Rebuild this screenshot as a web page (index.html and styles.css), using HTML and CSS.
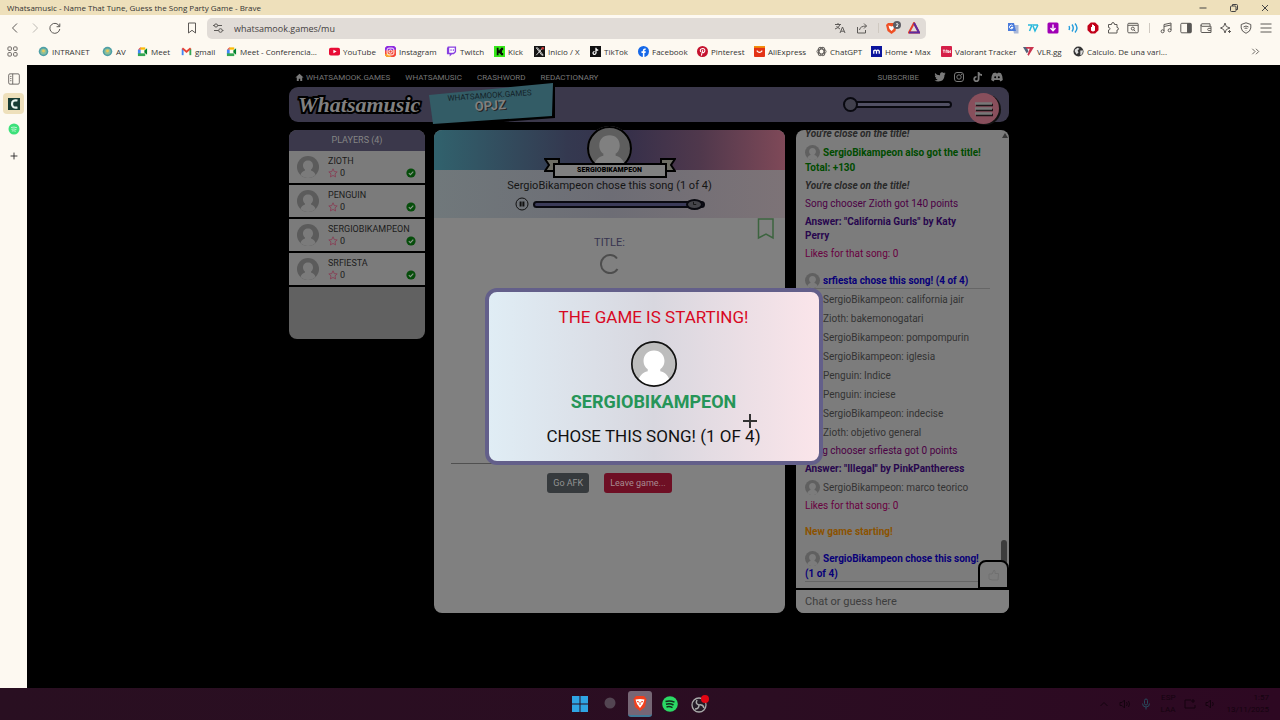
FILE: index.html
```html
<!DOCTYPE html>
<html lang="en">
<head>
<meta charset="utf-8">
<title>Whatsamusic - Name That Tune, Guess the Song Party Game</title>
<link rel="stylesheet" href="styles.css">
</head>
<body>
<svg class="defs" aria-hidden="true">
  <symbol id="person" viewBox="0 0 44 44"><circle cx="22" cy="22" r="22" fill="var(--disc)"/><path d="M22 9c6 0 10 4 10 10 0 4-2 7-4 8v2c5 1 8 5 9 9-8 8-22 8-30 0 1-4 4-8 9-9v-2c-2-1-4-4-4-8 0-6 4-10 10-10z" fill="var(--body)"/></symbol>
  <symbol id="star" viewBox="0 0 12 12"><path d="M6 1l1.5 3.3 3.5.4-2.6 2.4.7 3.6L6 8.9l-3.100 1.800.7-3.600L1 4.700l3.500-.4z" fill="none" stroke="#893c54" stroke-linejoin="round"/></symbol>
  <symbol id="check" viewBox="0 0 10 10"><circle cx="5" cy="5" r="4.600" fill="#064d0b"/><path d="M2.800 5.200l1.600 1.500 2.900-3.100" fill="none" stroke="#8a9a8a" stroke-width="1.100"/></symbol>
  <symbol id="meet" viewBox="0 0 12 12"><path d="M1 4l3-3v3z" fill="#ea4335"/><path d="M1 4h3v5H1z" fill="#4285f4"/><path d="M4 1.500h5V4H4z" fill="#fbbc04"/><path d="M1 8h3l5 0v3H1z" fill="#34a853"/><path d="M8 5l3-2.500v7L8 7z" fill="#00832d"/></symbol>
  <symbol id="seal" viewBox="0 0 12 12"><circle cx="6" cy="6" r="5.200" fill="#4e9fa6"/><circle cx="6" cy="6" r="3.400" fill="#8bbf9b"/><circle cx="6" cy="5.500" r="1.600" fill="#e7c95b"/></symbol>
</svg>

<header class="titlebar">
  <span>Whatsamusic - Name That Tune, Guess the Song Party Game - Brave</span>
  <div class="window-buttons">
    <button aria-label="Minimize"><svg viewBox="0 0 10 10"><path d="M1.500 5h7"/></svg></button>
    <button aria-label="Restore"><svg viewBox="0 0 10 10"><rect x="1.500" y="3" width="5.500" height="5.500" rx="1"/><path d="M3.500 3V1.500h4q1 0 1 1v4H7"/></svg></button>
    <button aria-label="Close"><svg viewBox="0 0 10 10"><path d="M2 2l6 6M8 2L2 8"/></svg></button>
  </div>
</header>

<nav class="toolbar" aria-label="Browser">
  <div class="nav-buttons">
    <button aria-label="Back"><svg viewBox="0 0 12 12"><path d="M8 1.500L3.500 6 8 10.500"/></svg></button>
    <button aria-label="Forward" class="faded"><svg viewBox="0 0 12 12"><path d="M4 1.500L8.500 6 4 10.500"/></svg></button>
    <button aria-label="Reload"><svg viewBox="0 0 12 12"><path d="M10.500 4.500A5 5 0 1 0 10.800 7M10.800 1.500v3.200H7.600"/></svg></button>
  </div>
  <button class="save-page" aria-label="Bookmark page"><svg viewBox="0 0 12 12"><path d="M2.500 1h7v10L6 8.300 2.500 11z"/></svg></button>
  <div class="address">
    <svg viewBox="0 0 12 12"><path d="M1 3.500h1.500M5.600 3.500H10M6.700 8.500H2M10.300 8.500h1.200"/><circle cx="4" cy="3.500" r="1.600"/><circle cx="8.500" cy="8.500" r="1.800"/></svg>
    <input aria-label="Address" value="whatsamook.games/mu">
    <svg viewBox="0 0 12 12"><path d="M1 2.500h6M4 1v1.500M6 2.500Q5 6 1 7M2.500 4Q4 6 6 7M6 11l2.500-6L11 11M7 9.200h3"/></svg>
    <svg viewBox="0 0 12 12"><path d="M1.500 5v6h8V8M3.500 8Q4 4 10.500 4M8 1.500L10.500 4 8 6.500"/></svg>
    <i class="divider"></i>
    <svg class="shield" viewBox="0 0 17 14"><path d="M3 2h7l1.500 2-1 6L6.500 13 2.500 10 1 4z" fill="#ef5025" stroke="none"/><path d="M3.500 4.500l3 1 3-1-1 3.500-2 2-2-2z" fill="#fff" stroke="none"/><circle cx="12" cy="4" r="4" fill="#5d5d65" stroke="none"/><path d="M11 3q1-1 2 0t-2 2.500h2" stroke="#fff" stroke-width=".8"/></svg>
    <svg viewBox="0 0 12 12"><path d="M6 1L11 10.500H1z" fill="#ddd" stroke="#e5412b" stroke-width="2"/><path d="M6 1l5 9.500H1" stroke="#5d2aa0" stroke-width="2"/></svg>
  </div>
  <div class="extensions">
    <svg viewBox="0 0 12 12"><path d="M5 3h6.500v8.500H7z" fill="#a9b8d8" stroke="none"/><path d="M1 1h6l2 8H1z" fill="#4a7bdc" stroke="none"/><path d="M5.800 4A1.800 1.800 0 1 0 6 5.500H4" stroke="#fff"/></svg>
    <svg viewBox="0 0 12 12"><path d="M1 3h4L2.500 9M6 4l2 5 3-6M6 3l5 0" stroke="#27b8dc" stroke-width="1.500"/></svg>
    <svg viewBox="0 0 12 12"><rect x=".5" y=".5" width="11" height="11" rx="1.500" fill="#a000b5" stroke="none"/><path d="M6 2.500v6M3.500 6L6 8.700 8.500 6" stroke="#fff" stroke-width="1.400"/></svg>
    <svg viewBox="0 0 12 12"><path d="M2 4q1 2 0 4M5 2.500q2.500 3.500 0 7M8 1.500q4 4.500 0 9" stroke="#219bdc" stroke-width="1.400"/></svg>
    <svg viewBox="0 0 12 12"><path d="M3.800.5h4.400l3.300 3.300v4.400l-3.300 3.300H3.800L.5 8.200V3.800z" fill="#c20019" stroke="none"/><path d="M4 5v3.500q2 2 4 0V4H7V3H6v-.5H5V5z" fill="#fff" stroke="none"/></svg>
    <svg viewBox="0 0 12 12"><path d="M1.500 2.500h3q0-2 1.500-2t1.500 2h2.500v3q1.500 0 1.500 1.300T10 8v3H1.500V8q1.500 0 1.500-1.300T1.500 5.500z"/></svg>
    <svg viewBox="0 0 12 12"><rect x=".8" y="1.300" width="10.400" height="9.500" rx="1"/><path d="M1 3.300h10"/><circle cx="5.800" cy="6.600" r="1.500"/><path d="M7 8l1.300 1.200"/></svg>
    <i class="divider"></i>
    <svg viewBox="0 0 12 12"><path d="M4 9V2.500L11 1v7M4 4.500L11 3"/><circle cx="2.600" cy="9.300" r="1.500"/><circle cx="9.600" cy="8.300" r="1.500"/></svg>
    <svg viewBox="0 0 12 12"><rect x=".8" y="1.300" width="10.400" height="9.500" rx="1"/><path d="M7.500 1.500h3.500v9H7.500z" fill="#555"/></svg>
    <svg viewBox="0 0 12 12"><path d="M10 4V1.800H2Q1 1.800 1 3t1 1.300h9V10.500H2q-1 0-1-1V3M11 6.300H8.300q-1.200 1.200 0 2.300H11"/></svg>
    <svg viewBox="0 0 12 12"><path d="M5 1l1.300 3.500L10 6 6.300 7.500 5 11 3.700 7.500.5 6l3.200-1.500zM9.500 8v3M8 9.500h3"/></svg>
    <svg viewBox="0 0 12 12"><path d="M6 .8l4.800 1.700V6Q10.500 9.500 6 11.300 1.500 9.500 1.200 6V2.500z"/><path d="M3.500 5q2.500-2 5 0M4.600 6.500q1.400-1 2.800 0M6 8v.5"/></svg>
    <svg viewBox="0 0 12 12"><path d="M.5 2h11M.5 6h11M.5 10h11"/></svg>
  </div>
</nav>

<nav class="bookmarks" aria-label="Bookmarks">
  <svg class="line" viewBox="0 0 12 12"><rect x="1" y="1" width="3.800" height="3.800" rx="1"/><rect x="7.200" y="1" width="3.800" height="3.800" rx="1"/><rect x="1" y="7.200" width="3.800" height="3.800" rx="1"/><rect x="7.200" y="7.200" width="3.800" height="3.800" rx="1"/></svg>
  <a href="#"><svg><use href="#seal"/></svg>INTRANET</a>
  <a href="#"><svg><use href="#seal"/></svg>AV</a>
  <a href="#"><svg><use href="#meet"/></svg>Meet</a>
  <a href="#"><svg viewBox="0 0 12 12"><path d="M1.800 10V3" stroke="#4285f4" stroke-width="2"/><path d="M10.200 10V3" stroke="#34a853" stroke-width="2"/><path d="M1.500 2.500L6 6.300l4.500-3.800" fill="none" stroke="#ea4335" stroke-width="2"/></svg>gmail</a>
  <a href="#"><svg><use href="#meet"/></svg>Meet - Conferencia...</a>
  <a href="#"><svg viewBox="0 0 12 12"><rect y="1.800" width="12" height="8.600" rx="2" fill="#e80c35"/><path d="M4.800 4v4l3.500-2z" fill="#fff"/></svg>YouTube</a>
  <a href="#"><svg viewBox="0 0 12 12"><path d="M2 0h8l2 2v4L6 5 0 6V2z" fill="#8d2ae0"/><path d="M0 5l12-1v6l-2 2H2l-2-2z" fill="#f4493a"/><path d="M0 9l4-1 3 4H2l-2-2z" fill="#f9a62b"/><rect x="2.300" y="2.300" width="7.400" height="7.400" rx="2" fill="none" stroke="#fff"/><circle cx="6" cy="6" r="1.800" fill="none" stroke="#fff"/></svg>Instagram</a>
  <a href="#"><svg viewBox="0 0 12 12"><path d="M2 .5h9v6L8.500 9H6.500L4 11.500V9H1V2.500z" fill="#8840e0"/><path d="M3.500 2h6v4L8 7.300H3.500z" fill="#fff"/><path d="M5.500 3.500v2M8 3.500v2" stroke="#8840e0"/></svg>Twitch</a>
  <a href="#"><svg viewBox="0 0 12 12"><path d="M0 0h12v12H0z" fill="#35e817"/><path d="M3 2h2v2.500h1.200V3.300h1.200V2H10v2.500H8.700v3H10V10H7.400V8.700H6.200V7.500H5V10H3z" fill="#071306"/></svg>Kick</a>
  <a href="#"><svg viewBox="0 0 12 12"><path d="M0 0h12v12H0z" fill="#151515"/><path d="M2.500 2l6 8h1.500L4 2zM9.500 2l-7 8" fill="none" stroke="#ddd"/><circle cx="9.500" cy="2.500" r="1.500" fill="#c63535"/></svg>Inicio / X</a>
  <a href="#"><svg viewBox="0 0 12 12"><path d="M0 0h12v12H0z" fill="#111"/><path d="M6.500 2v5.500A1.600 1.600 0 1 1 5 6M6.500 2.500Q7 4.500 9 4.500" fill="none" stroke="#fff" stroke-width="1.300"/></svg>TikTok</a>
  <a href="#"><svg viewBox="0 0 12 12"><circle cx="6" cy="6" r="6" fill="#1668e8"/><path d="M5.300 12V7.500H3.800V5.800h1.500V4.500Q5.300 2.300 8.500 2.800v1.400Q7 4 7 5v.8h1.500L8.200 7.500H7V12z" fill="#fff"/></svg>Facebook</a>
  <a href="#"><svg viewBox="0 0 12 12"><circle cx="6" cy="6" r="6" fill="#c5132f"/><path d="M4 6.500Q2.500 3 6.200 2.700 9 3 8.500 5.500 7.500 8 6 7M6.200 4.500L4.800 10.500" fill="none" stroke="#fff" stroke-width="1.200"/></svg>Pinterest</a>
  <a href="#"><svg viewBox="0 0 12 12"><rect width="12" height="12" rx="1" fill="#e33214"/><path d="M0 0h12v2H0z" fill="#f2910d"/><path d="M3 5q3 4 6 0" fill="none" stroke="#fff" stroke-width="1.300"/></svg>AliExpress</a>
  <a href="#"><svg class="line" viewBox="0 0 12 12"><ellipse cx="6" cy="6" rx="5" ry="2.600"/><ellipse cx="6" cy="6" rx="5" ry="2.600" transform="rotate(60 6 6)"/><ellipse cx="6" cy="6" rx="5" ry="2.600" transform="rotate(120 6 6)"/></svg>ChatGPT</a>
  <a href="#"><svg viewBox="0 0 12 12"><path d="M0 0h12v12H0z" fill="#0b149c"/><path d="M3 8.500v-4M3 5.500q1.500-2 3 0v3M6 5.500q1.500-2 3 0v3" fill="none" stroke="#fff" stroke-width="1.400"/></svg>Home • Max</a>
  <a href="#"><svg viewBox="0 0 12 12"><rect width="12" height="12" rx="1" fill="#d51f48"/><path d="M2 4.500h2.500M3.200 4.500v3M5.500 7.500v-3h1.300v3M8 4.500v3l1.200-1.500 1 1.500v-3" fill="none" stroke="#fff" stroke-width=".9"/></svg>Valorant Tracker</a>
  <a href="#"><svg viewBox="0 0 12 12"><path d="M0 1h4l2 5-2 2z" fill="#52627b"/><path d="M12 1H8L5 9l1 2z" fill="#c9334d"/><path d="M3 1h6L8 3H4z" fill="#c9334d"/></svg>VLR.gg</a>
  <a href="#"><svg viewBox="0 0 12 12"><circle cx="6" cy="6" r="5.500" fill="#333"/><path d="M2 4l3-2 2 1-2 2 1 2-2 2-2-3zM8 5l3 0-1 4-2 1z" fill="#ddd"/></svg>Calculo. De una vari...</a>
  <button aria-label="More bookmarks"><svg class="line" viewBox="0 0 12 12"><path d="M2.500 3l3 3-3 3M6.500 3l3 3-3 3"/></svg></button>
</nav>

<div class="workspace">
  <aside class="tabs">
    <button aria-label="Panel"><svg class="line" viewBox="0 0 14 14"><rect x=".8" y="1" width="12.400" height="12" rx="1.500"/><path d="M5.500 1v12M2.500 4h1.500M2.500 6.500h1.500M2.500 9h1.500"/></svg></button>
    <button class="current" aria-label="Whatsamusic"><svg viewBox="0 0 12 12"><path d="M0 0h12v12H0z" fill="#173c34"/><path d="M9.500 2.500Q4 1.500 4 6t5.500 3.500" fill="none" stroke="#e8f3ee" stroke-width="2.200"/></svg></button>
    <button aria-label="Spotify"><svg viewBox="0 0 12 12"><circle cx="6" cy="6" r="5.500" fill="#3ce17a"/><path d="M3 4.500q3-1 6 .3M3.400 6.300q2.600-.8 5 .3M3.800 8q2-.6 4 .3" fill="none" stroke="#baf5ce"/></svg></button>
    <button aria-label="New tab"><svg class="line dark" viewBox="0 0 14 14"><path d="M7 3v8M3 7h8"/></svg></button>
  </aside>

  <main class="page">
    <nav class="site-nav" aria-label="Site">
      <a href="#"><svg viewBox="0 0 10 10"><path d="M5 .8L.5 5H2v4h2.200V6.500h1.600V9H8V5h1.500z"/></svg>Whatsamook.games</a>
      <a href="#">Whatsamusic</a>
      <a href="#">Crashword</a>
      <a href="#">Redactionary</a>
      <a href="#" class="subscribe">Subscribe</a>
      <div class="social">
        <a href="#" aria-label="Twitter"><svg viewBox="0 0 12 12"><path d="M1 2q2 2.500 5 2.300Q5.800 1.500 8 1.300q1 0 1.700.7l1.600-.5-.8 1.300 1.200-.2-1.200 1.300Q10.500 8.500 7 10 3.500 11.200.5 9.500q2 0 3.200-1Q2 8.300 1.600 7H2.500Q.8 6.200.8 4.600l1 .2Q.3 3.500 1 2z"/></svg></a>
        <a href="#" aria-label="Instagram"><svg viewBox="0 0 12 12"><g fill="none" stroke="#7a7a7a"><rect x="1.500" y="1.500" width="9" height="9" rx="2.500"/><circle cx="6" cy="6" r="2.200"/></g><circle cx="8.700" cy="3.400" r=".7"/></svg></a>
        <a href="#" aria-label="TikTok"><svg viewBox="0 0 12 12"><path d="M6.600 1v7A2.200 2.200 0 1 1 4.500 5.800M6.600 1Q7 4 10 4" fill="none" stroke="#7a7a7a" stroke-width="1.800"/></svg></a>
        <a href="#" aria-label="Discord"><svg viewBox="0 0 12 12"><path d="M2 2.200L4.500 1.500l.5.800h2l.5-.8 2.500.7q2 3 1.800 6.800L9.500 10.500 8.500 9h-5l-1 1.500L.2 9Q0 5 2 2.200z"/><circle cx="4.200" cy="6.300" r="1" fill="#000"/><circle cx="7.800" cy="6.300" r="1" fill="#000"/></svg></a>
      </div>
    </nav>

    <header class="game-bar">
      <h1>Whatsamusic</h1>
      <div class="room">
        <svg viewBox="0 0 130 44" aria-hidden="true"><path d="M6 14L127 3l0 33L10 45z" fill="#000"/><path d="M1 13L125 1l-1 33L5 42z" fill="#335c66"/></svg>
        <p>Whatsamook.games<strong>OPJZ</strong></p>
      </div>
      <input class="volume" type="range" aria-label="Volume" min="0" max="100" value="0">
      <button class="menu" aria-label="Menu"><svg viewBox="0 0 20 16"><path d="M2 4h17M2 9h17M2 14h17" stroke="#1d1518" stroke-width="2.500"/><path d="M1 2.500h17M1 7.500h17M1 12.500h17" stroke="#777" stroke-width="2.500"/></svg></button>
    </header>

    <div class="columns">
      <section class="players">
        <h2>Players (4)</h2>
        <ul>
          <li><svg class="face"><use href="#person"/></svg><div><b>Zioth</b><span><svg><use href="#star"/></svg>0</span></div><svg class="ready"><use href="#check"/></svg></li>
          <li><svg class="face"><use href="#person"/></svg><div><b>Penguin</b><span><svg><use href="#star"/></svg>0</span></div><svg class="ready"><use href="#check"/></svg></li>
          <li><svg class="face"><use href="#person"/></svg><div><b>SergioBikampeon</b><span><svg><use href="#star"/></svg>0</span></div><svg class="ready"><use href="#check"/></svg></li>
          <li><svg class="face"><use href="#person"/></svg><div><b>srfiesta</b><span><svg><use href="#star"/></svg>0</span></div><svg class="ready"><use href="#check"/></svg></li>
        </ul>
      </section>

      <section class="board">
        <div class="stage">
          <svg class="chooser" viewBox="0 0 44 44"><use href="#person"/><circle cx="22" cy="22" r="21" fill="none" stroke="#000" stroke-width="2"/></svg>
          <div class="ribbon">
            <svg viewBox="0 0 132 22" aria-hidden="true"><path d="M1 2h14v12H1l4-6zM131 2h-14v12h14l-4-6z" fill="#6d6d64" stroke="#000" stroke-width="2"/></svg>
            <span>SERGIOBIKAMPEON</span>
          </div>
        </div>
        <div class="song">
          <p>SergioBikampeon chose this song (1 of 4)</p>
          <div class="player">
            <button aria-label="Pause"><svg viewBox="0 0 14 14"><circle cx="7" cy="7" r="6"/><path d="M5.600 4.500v5M8.400 4.500v5" stroke-width="2"/></svg></button>
            <input type="range" aria-label="Time" min="0" max="100" value="100">
          </div>
        </div>
        <svg class="keep" viewBox="0 0 18 22" aria-hidden="true"><path d="M1.500 1h14.500v19L9 16l-7.500 4z" fill="none" stroke="#3c643f" stroke-width="1.500"/></svg>
        <h3>Title:</h3>
        <svg class="loader" viewBox="0 0 20 20" aria-hidden="true"><path d="M17 4.500A9 9 0 1 0 17.500 15" fill="none" stroke="#4d4d4d" stroke-width="2"/></svg>
        <hr>
        <div class="actions"><button>Go AFK</button><button class="leave">Leave game...</button></div>
      </section>

      <section class="chat">
        <ul class="messages">
          <li class="close">You're close on the title!</li>
          <li class="from got"><svg><use href="#person"/></svg>SergioBikampeon also got the title! Total: +130</li>
          <li class="close">You're close on the title!</li>
          <li class="points">Song chooser Zioth got 140 points</li>
          <li class="answer">Answer: "California Gurls" by Katy Perry</li>
          <li class="likes">Likes for that song: 0</li>
          <li class="from round"><svg><use href="#person"/></svg>srfiesta chose this song! (4 of 4)</li>
          <li class="from"><svg><use href="#person"/></svg>SergioBikampeon: california jair</li>
          <li class="from"><svg><use href="#person"/></svg>Zioth: bakemonogatari</li>
          <li class="from"><svg><use href="#person"/></svg>SergioBikampeon: pompompurin</li>
          <li class="from"><svg><use href="#person"/></svg>SergioBikampeon: iglesia</li>
          <li class="from"><svg><use href="#person"/></svg>Penguin: Indice</li>
          <li class="from"><svg><use href="#person"/></svg>Penguin: inciese</li>
          <li class="from"><svg><use href="#person"/></svg>SergioBikampeon: indecise</li>
          <li class="from"><svg><use href="#person"/></svg>Zioth: objetivo general</li>
          <li class="points">Song chooser srfiesta got 0 points</li>
          <li class="answer">Answer: "Illegal" by PinkPantheress</li>
          <li class="from"><svg><use href="#person"/></svg>SergioBikampeon: marco teorico</li>
          <li class="likes">Likes for that song: 0</li>
          <li class="new-game">New game starting!</li>
          <li class="from round"><svg><use href="#person"/></svg>SergioBikampeon chose this song! (1 of 4)</li>
        </ul>
        <i class="scroll-up"></i><i class="scroll-thumb"></i>
        <button class="like" aria-label="Like"><svg viewBox="0 0 14 14"><path d="M2 6h3l2-4q1.500 0 1 3.500h3.500L11 12H5L2 11z"/></svg></button>
        <input type="text" aria-label="Chat" placeholder="Chat or guess here">
      </section>
    </div>
  </main>

  <div class="overlay">
    <div class="dialog" role="dialog" aria-label="The game is starting">
      <p class="starting">The game is starting!</p>
      <svg viewBox="0 0 44 44"><use href="#person"/><circle cx="22" cy="22" r="21.200" fill="none" stroke="#111" stroke-width="1.600"/></svg>
      <p class="who">SergioBikampeon</p>
      <p>chose this song! (1 of 4)</p>
      <svg class="cursor" viewBox="0 0 14 14" aria-hidden="true"><path d="M7 0v14M0 7h14" stroke="#333" stroke-width="2"/></svg>
    </div>
  </div>
</div>

<footer class="taskbar">
  <div class="apps">
    <button aria-label="Start"><svg viewBox="0 0 16 16"><path d="M0 0h7.500v7.500H0zM8.500 0H16v7.500H8.500zM0 8.500h7.500V16H0zM8.500 8.500H16V16H8.500z" fill="#2fa5e4"/></svg></button>
    <button aria-label="Search"><svg viewBox="0 0 16 16"><circle cx="8" cy="7" r="5.500" fill="#534552"/></svg></button>
    <button class="active" aria-label="Brave"><svg viewBox="0 0 16 16"><path d="M4 1h8l2.500 3-1.500 8-5 4-5-4L1.500 4z" fill="#f0401f"/><path d="M3.500 4.500L8 4l4.500.5L11 9l-3 4-3-4z" fill="#fff"/><path d="M5 6.500l2 .5M11 6.500L9 7M8 7v3" stroke="#f0401f"/></svg></button>
    <button aria-label="Spotify"><svg viewBox="0 0 16 16"><circle cx="8" cy="8" r="7.800" fill="#2bd965"/><path d="M3.500 5.500q4.500-1.500 9 .7M4 8.300q4-1.200 7.500.7M4.500 11q3-1 6 .6" fill="none" stroke="#102e1a" stroke-width="1.500"/></svg></button>
    <button class="obs" aria-label="OBS"><svg viewBox="0 0 18 18"><circle cx="8" cy="10" r="7" fill="#241a26" stroke="#aaa" stroke-width="1.300"/><path d="M8 10Q4 9 6 5M8 10q4-1 5 3M8 10q0 4-4 4" fill="none" stroke="#aaa" stroke-width="1.500"/><circle cx="14" cy="4" r="4" fill="#e30613"/></svg></button>
  </div>
  <div class="tray">
    <svg viewBox="0 0 12 12"><path d="M2.500 8L6 4.500 9.500 8"/></svg>
    <svg viewBox="0 0 12 12"><path d="M1 4.500h2L5.500 2v8L3 7.500H1zM7.500 4q1.500 2 0 4M9.500 3q2 3 0 6"/></svg>
    <svg class="mic" viewBox="0 0 12 12"><rect x="4.500" y="1" width="3" height="6" rx="1.500"/><path d="M2.500 5.500q0 3.500 3.500 3.500t3.500-3.500M6 9v2.500"/></svg>
    <span>ESP<br>LAA</span>
    <svg viewBox="0 0 12 12"><path d="M7 2H1v8h10V7M9 1v4M7 3h4"/></svg>
    <svg viewBox="0 0 12 12"><path d="M1 4.500h2L5.500 2v8L3 7.500H1zM7.500 4q1.500 2 0 4"/></svg>
    <time>1:57<br>13/11/2025</time>
  </div>
</footer>
</body>
</html>
```
FILE: styles.css
```css
* { box-sizing: border-box; }
:root { --disc: #bdbdbd; --body: #fff; }
body { margin: 0; height: 100vh; display: flex; flex-direction: column; overflow: hidden; background: #000; font-family: Roboto, "Liberation Sans", sans-serif; font-size: 10px; }
button { border: 0; padding: 0; background: none; font: inherit; color: inherit; display: flex; align-items: center; justify-content: center; }
input { font: inherit; border: 0; background: none; min-width: 0; margin: 0; padding: 0; }
a { color: inherit; text-decoration: none; }
h1, h2, h3, p, ul { margin: 0; padding: 0; list-style: none; font-weight: 400; }
svg { display: block; flex: none; }
.defs { position: absolute; width: 0; height: 0; }

/* Browser chrome */
.titlebar, .toolbar, .bookmarks { flex: none; font-family: "Open Sans", "Noto Sans", sans-serif; color: #333; }
.titlebar { height: 15px; display: flex; align-items: center; justify-content: space-between; padding: 0 10px 0 7px; background: #eee0bb; font-size: 8px; }
.window-buttons { display: flex; gap: 21px; }
.window-buttons svg { width: 10px; height: 10px; fill: none; stroke: #444; }
.toolbar { height: 26px; display: flex; align-items: center; padding: 0 8px 0 9px; background: #fdf9f1; }
.toolbar svg { width: 12px; height: 12px; fill: none; stroke: #5d5a57; stroke-width: 1; }
.nav-buttons { display: flex; gap: 8px; }
.faded { opacity: .4; }
.save-page { margin-left: 125px; margin-right: 9px; }
.address { width: 719px; height: 21px; display: flex; align-items: center; gap: 10px; padding: 0 6px 0 5px; border-radius: 5px; background: #e1dcd7; }
.address input { flex: 1; font-size: 9px; color: #44413f; }
.toolbar .shield { width: 17px; height: 14px; margin: 0 -4px; }
.divider { width: 1px; height: 10px; background: #cfc9c1; }
.extensions { margin-left: auto; display: flex; align-items: center; gap: 8px; }
.extensions .divider { margin: 0 2px; }
.bookmarks { height: 25px; padding: 0 19px 3px 7px; display: grid; align-items: center; grid-template-columns: 31px 64px 35px 44px 45px 103px 56px 61px 48px 40px 56px 48px 59px 57px 62px 55px 70px 82px 50px 1fr auto; background: #fdf9f1; border-bottom: 1px solid #d6d2cd; font-size: 8px; white-space: nowrap; }
.bookmarks a { display: flex; align-items: center; gap: 3px; }
.bookmarks svg { width: 11px; height: 11px; }
.line { fill: none; stroke: #5d5a57; }
.line.dark { stroke: #222; }

.workspace { flex: 1; min-height: 0; display: flex; position: relative; margin-top: -1px; }
.tabs { width: 27px; flex: none; background: #fdf9f1; padding-top: 3px; display: flex; flex-direction: column; align-items: center; gap: 4px; }
.tabs button { width: 21px; height: 21px; border-radius: 4px; }
.tabs .current { background: #eee0bb; }
.tabs svg { width: 12px; height: 12px; }
.tabs button:last-child { margin-top: 2px; }

/* Game page */
.page { --disc: #515151; --body: #777; flex: 1; min-width: 0; display: flex; flex-direction: column; align-items: center; padding: 0 9px 75px 0; background: #000; }
.site-nav, .game-bar, .columns { width: 100%; max-width: 720px; }
.site-nav { height: 22px; flex: none; display: flex; align-items: center; gap: 15px; padding: 2px 6px 0 6px; font-size: 8px; text-transform: uppercase; color: #777; }
.site-nav a { display: flex; align-items: center; gap: 2px; }
.site-nav svg { fill: #7a7a7a; width: 9px; height: 9px; }
.site-nav .subscribe { margin-left: auto; }
.social { display: flex; gap: 7px; }
.site-nav .social svg { width: 12px; height: 12px; }
.game-bar { height: 35px; flex: none; position: relative; display: flex; align-items: center; padding: 0 10px 0 9px; border-radius: 9px; background: #3b384b; }
.game-bar h1 { font-family: "Liberation Serif", serif; font-style: italic; font-weight: 700; font-size: 22px; line-height: 34px; color: #808080; -webkit-text-stroke: 4px #000; paint-order: stroke fill; }
.room { position: absolute; left: 139px; top: -5px; width: 130px; height: 44px; }
.room svg { width: 130px; height: 44px; }
.room p { position: absolute; inset: 9px 6px auto 0; text-align: center; transform: rotate(-4deg); font-size: 8px; line-height: 9px; text-transform: uppercase; color: #142329; }
.room strong { display: block; font-size: 13px; line-height: 12px; color: #808080; text-shadow: 1px 1px 0 #222; }
input[type="range"] { appearance: none; border: 2px solid #090910; border-radius: 4px; }
input[type="range"]::-webkit-slider-thumb { appearance: none; width: 15px; height: 15px; border: 2px solid #090910; border-radius: 50%; background: #41404d; }
.volume { width: 102px; height: 7px; margin-left: auto; margin-right: 16px; background: #515064; }
.volume::-webkit-slider-thumb { margin-left: -9px; background: #41404d url("data:image/svg+xml,%3Csvg xmlns='http://www.w3.org/2000/svg' viewBox='0 0 12 12'%3E%3Cpath d='M2 5h2l2-2v6L4 7H2zM8 4q1 2 0 4' fill='none' stroke='%23858494'/%3E%3C/svg%3E"); }
.menu { width: 31px; height: 31px; margin-top: 8px; border-radius: 50%; background: #884f5c; box-shadow: 2px 1px 0 #111; }
.menu svg { width: 20px; height: 16px; }
.columns { flex: 1; min-height: 0; margin-top: 8px; display: grid; grid-template-columns: 136px 1fr 213px; gap: 9px; }

.players { align-self: start; min-height: 209px; border-radius: 8px; overflow: hidden; background: #616161; text-transform: uppercase; }
.players h2 { line-height: 21px; text-align: center; font-size: 9px; background: #3b384b; color: #858585; }
.players li { height: 34px; display: flex; align-items: center; padding: 0 9px 0 8px; background: #7b7b7b; border-bottom: 2px solid #000; color: #1c1c1c; }
.face { width: 22px; height: 22px; margin-right: 9px; }
.players .face { --body: #7b7b7b; --disc: #5b5b5b; }
.players div { flex: 1; min-width: 0; font-size: 9px; line-height: 12px; white-space: nowrap; }
.players b { display: block; font-weight: 400; }
.players span { display: flex; align-items: center; gap: 2px; }
.players span svg, .ready { width: 10px; height: 10px; }
.ready { align-self: flex-end; margin-bottom: 5px; }

.board { position: relative; margin-right: 2px; border-radius: 8px; background: #808080; display: flex; flex-direction: column; align-items: center; }
.stage { width: 100%; height: 40px; position: relative; border-radius: 8px 8px 0 0; background: linear-gradient(90deg, #31626d, #343950 38%, #36304a 55%, #50384c 76%, #7f4958); }
.chooser { position: absolute; left: 50%; top: -4px; margin-left: -23px; width: 45px; height: 45px; --body: #808080; --disc: #5e5e5e; }
.ribbon { position: absolute; left: 50%; top: 27px; margin-left: -66px; width: 132px; height: 21px; padding: 6px 9px 0; }
.ribbon svg { position: absolute; left: 0; top: 0; width: 132px; height: 22px; }
.ribbon span { position: relative; display: block; border: 2px solid #000; background: #808080; color: #000; text-align: center; font-size: 7px; font-weight: 900; line-height: 11px; }
.song { width: 100%; height: 48px; padding-top: 9px; text-align: center; font-size: 11px; line-height: 14px; color: #151515; background: linear-gradient(90deg, #70787b, #6d6d75 50%, #7d7377); }
.player { display: flex; align-items: center; justify-content: center; gap: 4px; margin-top: 4px; }
.player button svg { width: 14px; height: 14px; fill: none; stroke: #111; }
.player input { width: 172px; height: 7px; background: #3b3b59; }
.player input::-webkit-slider-thumb { width: 17px; height: 11px; background: #44444a url("data:image/svg+xml,%3Csvg xmlns='http://www.w3.org/2000/svg' viewBox='0 0 12 8'%3E%3Cpath d='M6 1v3h3' fill='none' stroke='%23111'/%3E%3C/svg%3E"); }
.keep { position: absolute; right: 10px; top: 88px; width: 18px; height: 22px; }
.board h3 { margin-top: 18px; font-size: 11px; line-height: 14px; text-transform: uppercase; color: #37344f; }
.loader { width: 20px; height: 20px; margin-top: 4px; }
.board hr { width: calc(100% - 34px); margin: 189px 0 9px; border: 0; border-top: 1px solid #505050; }
.actions { display: flex; gap: 15px; font-size: 9px; }
.actions button { height: 20px; padding: 0 6px; border-radius: 3px; background: #363a3d; color: #939393; }
.actions .leave { background: #6e0f24; color: #a78b91; }

.chat { position: relative; min-height: 0; display: flex; flex-direction: column; background: #7c7c7c; border-radius: 8px; overflow: hidden; }
.messages { flex: 1; min-height: 0; overflow: hidden; display: flex; flex-direction: column; gap: 4px; padding: 0 19px 0 9px; margin-top: -3px; font-size: 10px; line-height: 14px; color: #333; --disc: #606060; --body: #7c7c7c; }
.messages .from { line-height: 15px; }
.messages svg { display: inline-block; vertical-align: top; width: 15px; height: 15px; margin-right: 3px; }
.close, .got, .answer, .round, .new-game { font-weight: 700; }
.close { font-style: italic; color: #292929; }
.got { color: #004b00; }
.points { color: #4b0044; }
.answer { max-width: 170px; color: #28074e; }
.likes { color: #690040; }
.round { margin-top: 8px; color: #080078; border-bottom: 1px solid #666; }
.round + .from { margin-top: -1px; }
.new-game { margin-top: 8px; color: #8b5200; }
.scroll-up { position: absolute; right: 1px; top: 3px; border: 3px solid transparent; border-top: 0; border-bottom: 5px solid #383838; }
.scroll-thumb { position: absolute; right: 2px; bottom: 51px; width: 6px; height: 22px; border-radius: 3px 3px 0 0; background: #3d3d3d; }
.like { position: absolute; right: 0; bottom: 24px; width: 31px; height: 29px; border: 2px solid #000; border-radius: 8px 8px 0 0; background: #7c7c7c; }
.like svg { width: 14px; height: 14px; fill: none; stroke: #707070; }
.chat input { flex: none; height: 25px; padding: 0 9px; border-top: 2px solid #000; background: #808080; font-size: 11px; }
.chat input::placeholder { color: #3d3d3d; }

/* Round announcement */
.overlay { position: absolute; inset: 0 0 0 27px; display: flex; align-items: center; justify-content: center; }
.dialog { position: relative; width: 338px; padding: 13px 12px; display: flex; flex-direction: column; align-items: center; border: 4px solid #635f8a; border-radius: 12px; background: linear-gradient(90deg, #e0edf5, #d8d7df 50%, #fbe5ea); color: #111; font-size: 17px; line-height: 24px; text-transform: uppercase; }
.dialog svg { width: 46px; height: 46px; margin: 12px 0 3px; }
.starting { color: #d80823; }
.dialog .who { color: #269558; font-size: 18px; font-weight: 700; margin-bottom: 10px; }
.dialog .cursor { position: absolute; left: 254px; top: 122px; width: 14px; height: 14px; margin: 0; }

.taskbar { flex: none; height: 32px; position: relative; display: flex; align-items: center; justify-content: center; background: linear-gradient(90deg, #290f21, #2b0d22 60%, #2d0822); }
.apps { display: flex; gap: 6px; }
.apps button { width: 24px; height: 26px; border-radius: 3px; }
.apps svg { width: 16px; height: 16px; }
.apps .obs svg { width: 18px; height: 18px; }
.apps .active { background: #766675; border-bottom: 2px solid #417a98; }
.tray { position: absolute; right: 11px; top: 4px; display: flex; align-items: center; gap: 9px; color: #14030f; font-size: 8px; line-height: 12px; text-align: right; }
.tray svg { width: 12px; height: 12px; fill: none; stroke: #14030f; }
.tray .mic { stroke: #284a5c; }
```
